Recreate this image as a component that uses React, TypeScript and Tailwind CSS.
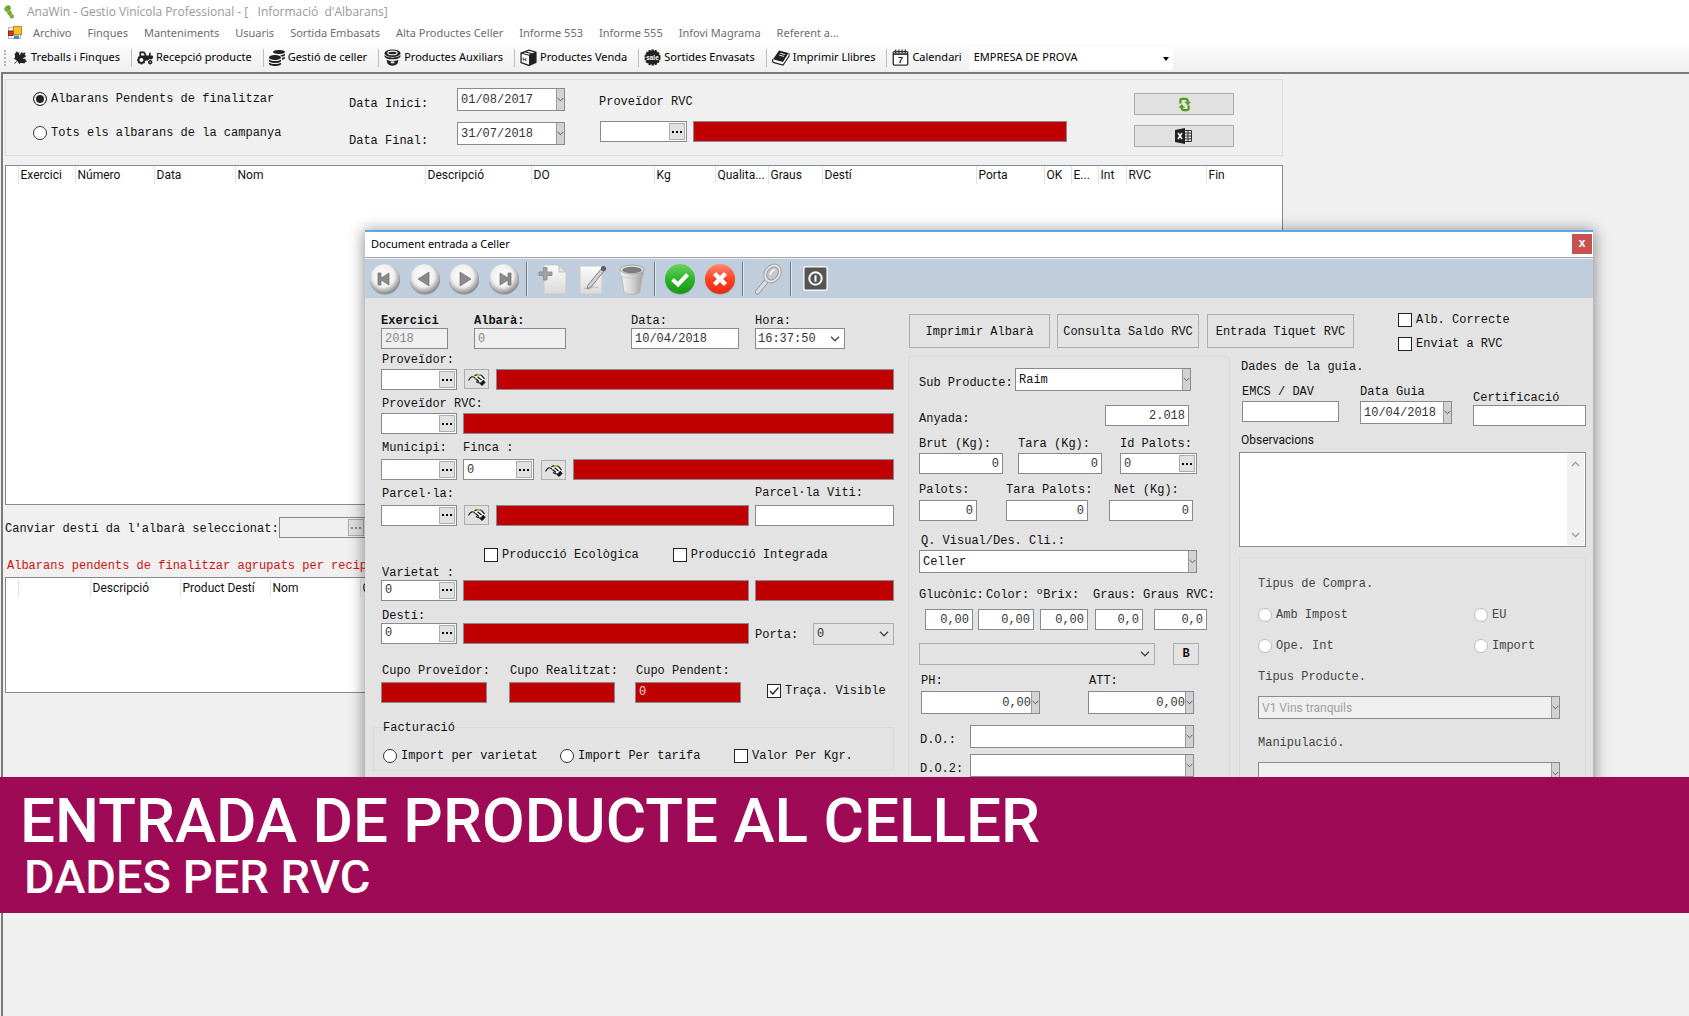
import React, { useId } from "react";
import { FaCanadianMapleLeaf, FaTractor, FaCoins } from "react-icons/fa";

const MONO = "font-['Liberation_Mono','Courier_New',monospace] text-[12px] leading-4";
const EDGE = "border border-[#858a93]";

/* ---------- toolbar icons ---------- */

const Spool = () => (
  <svg viewBox="0 0 16 16" className="h-[17px] w-[17px]" aria-hidden="true">
    <ellipse cx="8" cy="4" rx="7.5" ry="3.6" fill="#222" />
    <ellipse cx="8" cy="3.7" rx="4.4" ry="1.7" fill="none" stroke="#fff" strokeWidth="1" />
    <path d="M.5 5.500C2 9 14 9 15.500 5.500V7C14 10.600 2 10.600.500 7Z" fill="#222" />
    <path d="M2.500 10.200c3 1.600 8 1.600 11 0l-.6 3.300c-2 3-8 3-9.800 0Z" fill="#222" />
    <rect x="6.300" y="11.800" width="3.400" height="1.600" fill="#fff" />
  </svg>
);

const Box = () => (
  <svg viewBox="0 0 16 16" className="h-[17px] w-[17px]" aria-hidden="true">
    <path d="M1 3.800 8.500 1 15 3v9.500L8.500 15.500 1 12.800Z" fill="#fff" stroke="#222" strokeWidth="1.200" />
    <path d="M8.500 5.800 15 3v9.500l-6.500 3Z" fill="#222" />
    <path d="M1 3.800l7.500 2L15 3M4.500 2.500l7 2" fill="none" stroke="#222" />
    <path d="M3 8v3M5.500 8.500v3M3 9.600l2.500.6" stroke="#444" strokeWidth=".9" />
  </svg>
);

const Sale = () => (
  <svg viewBox="0 0 16 16" className="h-[17px] w-[17px]" aria-hidden="true">
    <circle cx="8" cy="8" r="6.600" fill="#222" stroke="#222" strokeWidth="2" strokeDasharray="2.200 .8" />
    <text x="8" y="10.200" textAnchor="middle" fontSize="6" fontWeight="bold" fontFamily="Liberation Sans" fill="#fff">
      sale
    </text>
  </svg>
);

const Book = () => (
  <svg viewBox="0 0 18 16" className="h-[17px] w-[18px]" aria-hidden="true">
    <path d="M7 1 16.500 3.500 11 12.500 1 9.800Z" fill="#222" />
    <path d="M8.200 3.800l4.800 1.300M7.200 5.600l4.800 1.300" stroke="#fff" strokeWidth=".9" />
    <path d="M1 9.800C0 11.500.8 12.800 2 13.200L11 15.500 17 6.500V3.800" fill="none" stroke="#222" strokeWidth="1.200" />
    <path d="M2 11.500l9 2.400L16.500 5" fill="none" stroke="#fff" strokeWidth=".8" />
  </svg>
);

const Calendar = () => (
  <svg viewBox="0 0 16 16" className="h-[17px] w-[17px]" aria-hidden="true">
    <rect x="1.200" y="2.500" width="13.600" height="12.700" rx="1" fill="#fff" stroke="#333" strokeWidth="1.300" />
    <path d="M1 4.800h14" stroke="#333" strokeWidth="1.600" />
    <path d="M3.500.5v3.500M6.500.5v3.500M9.500.5v3.500M12.500.5v3.500" stroke="#333" strokeWidth="1.200" />
    <text x="8" y="13.300" textAnchor="middle" fontSize="8.500" fontWeight="bold" fontFamily="Liberation Sans" fill="#222">
      7
    </text>
  </svg>
);

const Leaf = () => (
  <svg viewBox="0 0 12 14" className="h-[14px] w-[12px]" aria-hidden="true">
    <path d="M1.500 3.500 3.500 1 6.500.8 7.500 3 6.800 5.500 8.500 7 8.300 9 10.500 10.500 10.300 12.500 8 13.200 6.500 10.500 4.800 9 4.500 6.500 2.500 6Z" fill="#6fa51f" stroke="#5c9417" strokeWidth=".6" />
    <path d="M3 3.500C5 4.500 6 7 9 12" fill="none" stroke="#a4d14f" strokeWidth=".9" />
  </svg>
);

const FormLogo = () => (
  <svg viewBox="0 0 14 14" className="h-[14px] w-[14px]" aria-hidden="true">
    <rect x=".5" y="1.500" width="12" height="11" fill="#f4f4f4" stroke="#b9b9b9" />
    <rect x="5.500" y=".5" width="8" height="8" fill="#f2c230" stroke="#c08d12" />
    <rect x=".5" y="5" width="4.500" height="4.500" fill="#d33a21" stroke="#9c2514" />
    <rect x="6" y="9.500" width="5" height="3.500" fill="#4d86d9" />
  </svg>
);

const Chevron = ({ className = "h-2 w-2" }: { className?: string }) => (
  <svg viewBox="0 0 10 6" className={className} aria-hidden="true" fill="none" stroke="currentColor" strokeWidth="1.300">
    <path d="M1 .8 5 4.800 9 .8" />
  </svg>
);

/* ---------- dialog toolbar icons ---------- */

const Defs = () => (
  <svg className="absolute h-0 w-0" aria-hidden="true">
    <defs>
      <radialGradient id="silver" cx=".45" cy=".4" r=".6">
        <stop offset="0" stopColor="#fff" />
        <stop offset=".6" stopColor="#f0f0f0" />
        <stop offset="1" stopColor="#858585" />
      </radialGradient>
      <linearGradient id="green" x1="0" y1="0" x2="0" y2="1">
        <stop offset="0" stopColor="#6fd35f" />
        <stop offset=".5" stopColor="#2db52a" />
        <stop offset="1" stopColor="#159a12" />
      </linearGradient>
      <linearGradient id="red" x1="0" y1="0" x2="0" y2="1">
        <stop offset="0" stopColor="#ff8a72" />
        <stop offset=".5" stopColor="#fb4326" />
        <stop offset="1" stopColor="#ee2a0c" />
      </linearGradient>
      <linearGradient id="paper" x1="0" y1="0" x2="0" y2="1">
        <stop offset="0" stopColor="#fbfbfb" />
        <stop offset="1" stopColor="#dadada" />
      </linearGradient>
      <linearGradient id="steel" x1="0" y1="0" x2="1" y2="0">
        <stop offset="0" stopColor="#f4f4f4" />
        <stop offset=".5" stopColor="#d4d4d4" />
        <stop offset="1" stopColor="#a0a0a0" />
      </linearGradient>
    </defs>
  </svg>
);

const Round = ({ fill = "url(#silver)", children }: { fill?: string; children: React.ReactNode }) => (
  <svg viewBox="0 0 32 32" className="h-8 w-8" aria-hidden="true">
    <ellipse cx="16" cy="17" rx="15" ry="14.800" fill="#7f8790" opacity=".5" />
    <circle cx="16" cy="16" r="15" fill={fill} />
    {children}
  </svg>
);

const PageIcon = () => (
  <svg viewBox="0 0 32 32" className="h-8 w-8" aria-hidden="true">
    <path d="M7 2h15l7 7v22H7Z" fill="url(#paper)" stroke="#c9c9c9" />
    <path d="M22 2v7h7Z" fill="#e4e4e4" stroke="#bdbdbd" />
    <path d="M6.500 4.500h3.500v4.500h5v3.500h-5v4.500H6.500v-4.500H2v-3.500h4.500Z" fill="#a3a3a3" stroke="#868686" strokeWidth=".8" />
  </svg>
);

const EditIcon = () => (
  <svg viewBox="0 0 32 32" className="h-8 w-8" aria-hidden="true">
    <rect x="3" y="3" width="22" height="28" fill="url(#paper)" stroke="#c9c9c9" />
    <path d="M7 26c3-3 4 2 7-1s4 1 7-1" fill="none" stroke="#b8b8b8" />
    <path d="M11 22 24.500 5.500l2.800 2.200L14 24 10 26Z" fill="#cfcfcf" stroke="#7d7d7d" strokeWidth=".9" />
    <circle cx="26.500" cy="5.500" r="2.600" fill="#5b5f66" />
  </svg>
);

const BinIcon = () => (
  <svg viewBox="0 0 32 32" className="h-8 w-8" aria-hidden="true">
    <path d="M5.500 11h21L24 29c-4 3-12 3-16 0Z" fill="url(#steel)" stroke="#b5b5b5" strokeWidth=".8" />
    <path d="M4 6l.6 6.500c5 3.500 17.800 3.500 22.800 0L28 6Z" fill="url(#steel)" stroke="#b9b9b9" strokeWidth=".6" />
    <ellipse cx="16" cy="6.500" rx="12" ry="4.500" fill="#e3e3e3" stroke="#a5a5a5" />
    <ellipse cx="16" cy="7" rx="9.800" ry="3.200" fill="#7d7d7d" />
  </svg>
);

const SearchIcon = () => (
  <svg viewBox="0 0 32 32" className="h-8 w-8" aria-hidden="true">
    <path d="M13.500 18 4.500 29" stroke="#8f9499" strokeWidth="5" strokeLinecap="round" />
    <path d="M13.500 18 4.500 29" stroke="#dcdcdc" strokeWidth="3.400" strokeLinecap="round" />
    <ellipse cx="19.500" cy="10.500" rx="8" ry="10" transform="rotate(38 19.500 10.500)" fill="#e6e6e6" stroke="#a9a9a9" strokeWidth="1.200" />
    <ellipse cx="19.500" cy="10.500" rx="5.200" ry="7" transform="rotate(38 19.500 10.500)" fill="#c4c8cc" stroke="#999" />
    <path d="M17 12c1-3 3-5 5-5.500" fill="none" stroke="#fff" strokeWidth="1.300" />
  </svg>
);

const PowerIcon = () => (
  <svg viewBox="0 0 25 25" className="h-[25px] w-[25px]" aria-hidden="true">
    <rect x=".8" y=".8" width="23.400" height="23.400" rx="2" fill="#555" stroke="#f5f5f5" strokeWidth="1.500" />
    <circle cx="12.500" cy="12.500" r="6.200" fill="none" stroke="#fff" strokeWidth="2" />
    <path d="M12.500 9.300v6.400" stroke="#fff" strokeWidth="2" />
  </svg>
);

const HandIcon = () => (
  <svg viewBox="0 0 18 13" className="h-[13px] w-[18px]" aria-hidden="true">
    <path d="M.5 7.500C2.500 3.500 5 2.500 7.500 5.500" fill="none" stroke="#222" strokeWidth="1.200" />
    <path d="M6.500 2.500 10 1l4 1.500L16.500 6 15 7.500l2 2-3 3-3-2.500L7.500 6Z" fill="#fff" />
    <path d="M6.500 3C9 1 12.500 1.500 14 3l2.500 3" fill="none" stroke="#222" strokeWidth="1.200" />
    <path d="M9 1.700h3.500" stroke="#b9ad1c" strokeWidth="1.400" />
    <path d="M7.500 5.500l3.500 3M9.500 3.800 13.500 7M8 8.500l3 1.500" fill="none" stroke="#111" strokeWidth="1.300" />
    <path d="M11 9.500l3 3 3-3-1.800-2.300-1.700 2" fill="#111" stroke="#111" strokeWidth="1" />
  </svg>
);

/* ---------- form controls ---------- */

const Label = ({ children, htmlFor, className = "" }: { children: React.ReactNode; htmlFor?: string; className?: string }) => (
  <label htmlFor={htmlFor} className={`block h-4 shrink-0 whitespace-nowrap pt-px text-[#111] ${MONO} ${className}`}>
    {children}
  </label>
);

type BoxProps = { id?: string; value?: string; name?: string; className?: string; right?: boolean; disabled?: boolean };

const Text = ({ id, value = "", name, className = "", right, disabled }: BoxProps) => (
  <input
    id={id}
    aria-label={name}
    defaultValue={value}
    disabled={disabled}
    className={`h-[21px] min-w-0 rounded-none px-[3px] outline-none ${MONO} ${EDGE} ${right ? "text-right" : ""} ${
      disabled ? "bg-[#efefef] text-[#888]" : "bg-white text-[#333]"
    } ${className}`}
  />
);

const Red = ({ id, value = "", name = "Descripció", className = "" }: BoxProps) => (
  <input id={id} aria-label={name} readOnly value={value} className={`h-[21px] min-w-0 rounded-none bg-[#c00000] px-[3px] text-[#f3dcdc] outline-none ${MONO} ${EDGE} ${className}`} />
);

const Lookup = ({ id, value = "", name, className = "", disabled }: BoxProps) => (
  <div className={`flex h-[21px] shrink-0 items-center p-px ${EDGE} ${disabled ? "bg-[#efefef]" : "bg-white"} ${className}`}>
    <input id={id} aria-label={name} defaultValue={value} disabled={disabled} className={`min-w-0 flex-1 bg-transparent px-[2px] text-[#333] outline-none ${MONO}`} />
    <button
      type="button"
      aria-label="Cercar"
      className={`flex h-[17px] w-4 shrink-0 items-center justify-center gap-[2px] border border-[#adadad] bg-[#e1e1e1] ${disabled ? "text-[#888]" : "text-black"}`}
    >
      <i className="h-[2px] w-[2px] bg-current" />
      <i className="h-[2px] w-[2px] bg-current" />
      <i className="h-[2px] w-[2px] bg-current" />
    </button>
  </div>
);

const Strip = () => (
  <button type="button" aria-label="Desplegar" className="flex w-2 shrink-0 items-center justify-center overflow-hidden border-l border-[#9a9a9a] bg-[#d2d2d2] text-[#444]">
    <Chevron className="h-[5px] w-2" />
  </button>
);

const Drop = ({ id, value = "", name, className = "", right }: BoxProps) => (
  <div className={`flex h-[23px] bg-white ${EDGE} ${className}`}>
    <input id={id} aria-label={name} defaultValue={value} className={`min-w-0 flex-1 px-[3px] text-[#333] outline-none ${right ? "pr-0 text-right" : ""} ${MONO}`} />
    <Strip />
  </div>
);

const Select = ({ id, value = "", name, className = "", disabled }: BoxProps) => (
  <div className={`relative h-[23px] ${EDGE} ${disabled ? "bg-[#efefef]" : "bg-white"} ${className}`}>
    <select
      id={id}
      aria-label={name}
      disabled={disabled}
      className={`block h-full w-full appearance-none bg-transparent px-[3px] outline-none ${
        disabled ? "font-[Roboto,sans-serif] text-[12px] text-[#a0a0a0]" : `text-[#111] ${MONO}`
      }`}
    >
      <option>{value}</option>
    </select>
    <span className="pointer-events-none absolute inset-y-0 right-0 flex w-2 items-center justify-center overflow-hidden border-l border-[#9a9a9a] bg-[#d2d2d2] text-[#555]">
      <Chevron className="h-[5px] w-2" />
    </span>
  </div>
);

const FlatSelect = ({ id, value = "", name, className = "" }: BoxProps) => (
  <div className={`relative h-[22px] border border-[#acacac] ${className}`}>
    <select id={id} aria-label={name} className={`block h-full w-full appearance-none bg-transparent px-[3px] text-[#333] outline-none ${MONO}`}>
      <option>{value}</option>
    </select>
    <span className="pointer-events-none absolute inset-y-0 right-1 flex items-center text-[#444]">
      <Chevron className="h-[6px] w-[10px]" />
    </span>
  </div>
);

const Check = ({ label, checked, className = "" }: { label: string; checked?: boolean; className?: string }) => (
  <label className={`flex h-4 shrink-0 items-center gap-1 whitespace-nowrap text-[#111] ${MONO} ${className}`}>
    <span className="relative h-[14px] w-[14px]">
      <input type="checkbox" defaultChecked={checked} className="peer block h-[14px] w-[14px] appearance-none border border-[#222] bg-white" />
      <svg viewBox="0 0 14 14" className="pointer-events-none absolute inset-0 hidden h-[14px] w-[14px] peer-checked:block" fill="none" stroke="#222" strokeWidth="1.300" aria-hidden="true">
        <path d="M3 7 5.800 10 11.500 3.500" />
      </svg>
    </span>
    {label}
  </label>
);

const Radio = ({ label, name, checked, faded, className = "" }: { label: string; name: string; checked?: boolean; faded?: boolean; className?: string }) => (
  <label className={`flex h-4 shrink-0 items-center gap-[4px] whitespace-nowrap ${faded ? "text-[#444]" : "text-[#111]"} ${MONO} ${className}`}>
    <input
      type="radio"
      name={name}
      defaultChecked={checked}
      className={`block h-[14px] w-[14px] appearance-none rounded-full border bg-white checked:bg-[#222] checked:shadow-[inset_0_0_0_2px_white] ${faded ? "border-[#bbb]" : "border-[#333]"}`}
    />
    {label}
  </label>
);

const Hand = () => (
  <button type="button" aria-label="Seleccionar" className="flex h-5 w-[25px] shrink-0 items-center justify-center border border-[#adadad] bg-[#e1e1e1]">
    <HandIcon />
  </button>
);

const Field = ({
  label,
  kind: Kind = Text,
  width,
  bold,
  indent = "",
  gap = "mt-[2px]",
  className = "",
  ...rest
}: { label: string; kind?: React.ComponentType<BoxProps>; width: string; bold?: boolean; indent?: string; gap?: string; className?: string; value?: string; right?: boolean; disabled?: boolean }) => {
  const id = useId();
  return (
    <div className={`${width} ${className}`}>
      <Label htmlFor={id} className={`${indent} ${bold ? "font-bold" : ""}`}>
        {label}
      </Label>
      <div className={`flex ${gap}`}>
        <Kind id={id} {...rest} className="w-full" />
      </div>
    </div>
  );
};

/* ---------- main window ---------- */

const MENU = ["Archivo", "Finques", "Manteniments", "Usuaris", "Sortida Embasats", "Alta Productes Celler", "Informe 553", "Informe 555", "Infovi Magrama", "Referent a..."];

const TOOLS: [string, React.ReactNode][] = [
  ["Treballs i Finques", <FaCanadianMapleLeaf className="h-4 w-4 rotate-45" />],
  ["Recepció producte", <FaTractor className="h-4 w-4" />],
  ["Gestió de celler", <FaCoins className="h-4 w-4" />],
  ["Productes Auxiliars", <Spool />],
  ["Productes Venda", <Box />],
  ["Sortides Envasats", <Sale />],
  ["Imprimir Llibres", <Book />],
  ["Calendari", <Calendar />],
];

type Col = [string, string];

const MAIN_COLS: Col[] = [
  ["", "w-[12px]"],
  ["Exercici", "w-[57px]"],
  ["Número", "w-[79px]"],
  ["Data", "w-[81px]"],
  ["Nom", "w-[190px]"],
  ["Descripció", "w-[106px]"],
  ["DO", "w-[123px]"],
  ["Kg", "w-[61px]"],
  ["Qualita...", "w-[53px]"],
  ["Graus", "w-[54px]"],
  ["Destí", "w-[154px]"],
  ["Porta", "w-[68px]"],
  ["OK", "w-[27px]"],
  ["E...", "w-[27px]"],
  ["Int", "w-[28px]"],
  ["RVC", "w-[80px]"],
  ["Fin", ""],
];

const GROUP_COLS: Col[] = [
  ["", "w-[12px]"],
  ["", "w-[72px]"],
  ["Descripció", "w-[90px]"],
  ["Product Destí", "w-[90px]"],
  ["Nom", "w-[90px]"],
  ["Capacitat", ""],
];

const Grid = ({ cols, name, className }: { cols: Col[]; name: string; className: string }) => (
  <div className={`bg-white ${EDGE} ${className}`}>
    <table aria-label={name} className="w-full table-fixed border-collapse font-[Roboto,sans-serif] text-[12px] leading-[18px] text-[#111]">
      <thead>
        <tr>
          {cols.map(([text, width], i) => (
            <th key={i} scope="col" className={`overflow-hidden whitespace-nowrap pl-[2px] text-left font-normal ${width} ${i ? "border-l border-[#e3e3e3]" : ""}`}>
              {text}
            </th>
          ))}
        </tr>
      </thead>
      <tbody />
    </table>
  </div>
);

const Header = () => (
  <header className="bg-white font-['Noto_Sans','Open_Sans',sans-serif] text-[11px]">
    <div className="flex h-[23px] items-center gap-[12px] pl-[3px] text-[#999]">
      <Leaf />
      <h1 className="whitespace-pre font-['Open_Sans',sans-serif] text-[12px]">AnaWin - Gestio Vinícola Professional - [   Informació  d'Albarans]</h1>
    </div>
    <nav className="flex h-5 items-center pl-2 text-[#6d6d6d]">
      <FormLogo />
      <ul className="ml-[11px] flex gap-4 whitespace-nowrap">
        {MENU.map((m) => (
          <li key={m}>
            <a href="#">{m}</a>
          </li>
        ))}
      </ul>
    </nav>
    <div className="flex h-[29px] items-center bg-linear-to-b from-[#fdfdfd] to-[#efefef] pl-1">
      <span className="mr-[6px] h-[16px] border-l-2 border-dotted border-[#b5b5b5]" />
      {TOOLS.map(([text, icon], i) => (
        <div key={text} className="flex items-center">
          {i > 0 && <span className="ml-[11px] mr-[5px] h-[18px] w-px bg-[#bdbdbd]" />}
          <button type="button" className="flex items-center gap-[3px] whitespace-nowrap text-black">
            <span className="text-[#222]">{icon}</span>
            {text}
          </button>
        </div>
      ))}
      <div className="relative ml-[7px] h-[24px] w-[204px] bg-white">
        <select aria-label="Empresa" className="block h-full w-full appearance-none bg-transparent pl-[5px] text-black outline-none">
          <option>EMPRESA DE PROVA</option>
        </select>
        <span className="pointer-events-none absolute right-1 top-[11px] border-x-[3px] border-t-[4px] border-x-transparent border-t-black" />
      </div>
    </div>
  </header>
);

const Filters = () => (
  <section className="mr-[406px] flex h-[77px] items-start border border-[#dcdcdc] pl-[27px]">
    <div className="w-[316px] pt-[11px]">
      <Radio name="abast" label="Albarans Pendents de finalitzar" checked />
      <Radio name="abast" label="Tots els albarans de la campanya" className="mt-[18px]" />
    </div>
    <div className="pt-2">
      <div className="flex items-start">
        <Label htmlFor="inici" className="mt-[7px] w-[108px]">Data Inici:</Label>
        <Drop id="inici" value="01/08/2017" className="w-[108px]" />
      </div>
      <div className="mt-[11px] flex items-start">
        <Label htmlFor="final" className="mt-[10px] w-[108px]">Data Final:</Label>
        <Drop id="final" value="31/07/2018" className="w-[108px]" />
      </div>
    </div>
    <div className="ml-[34px] min-w-0 flex-1 pt-[13px]">
      <Label htmlFor="prov-rvc">Proveïdor RVC</Label>
      <div className="mt-[12px] flex gap-[6px]">
        <Lookup id="prov-rvc" className="ml-px w-[87px]" />
        <Red className="flex-1" />
      </div>
    </div>
    <div className="ml-[67px] mr-[48px] w-[100px] pt-[13px]">
      <button type="button" aria-label="Actualitzar" className="flex h-[22px] w-full items-center justify-center border border-[#adadad] bg-[#e1e1e1]">
        <svg viewBox="0 0 14 16" className="h-[15px] w-[13px]" fill="none" stroke="#4f9a16" strokeWidth="2.400" aria-hidden="true">
          <path d="M2.500 7V3.800C2.500 2.500 3.500 2 5 2h3c2 0 2.500 1 2.500 3" />
          <path d="M11.500 9v3.200c0 1.300-1 1.800-2.500 1.800H6.500C4.500 14 4 13 4 11.500" />
          <path d="M7 5h7l-3.500 4ZM.5 11.500h7L4 7.800Z" fill="#4f9a16" stroke="none" />
          <path d="M6 8.500 9 7" stroke="#e1e1e1" strokeWidth="1" />
        </svg>
      </button>
      <button type="button" aria-label="Exportar a Excel" className="mt-[10px] flex h-[22px] w-full items-center justify-center border border-[#adadad] bg-[#e1e1e1]">
        <svg viewBox="0 0 18 16" className="h-4 w-[18px]" aria-hidden="true">
          <path d="M0 2 10 0v16L0 14Z" fill="#222" />
          <path d="M3 5l4 6M7 5l-4 6" stroke="#fff" strokeWidth="1.500" />
          <path d="M10 2.500h6.500v11H10M10 5.200h6.500M10 8h6.500M10 10.800h6.500M13 2.500v11" fill="none" stroke="#333" />
        </svg>
      </button>
    </div>
  </section>
);

/* ---------- dialog ---------- */

const Sep = ({ className = "" }: { className?: string }) => <span className={`h-[34px] w-[2px] border-l border-[#6f7780] bg-[#dfe7ef] ${className}`} />;

const Tool = ({ name, className = "", children }: { name: string; className?: string; children: React.ReactNode }) => (
  <button type="button" aria-label={name} className={`shrink-0 ${className}`}>
    {children}
  </button>
);

const Big = ({ children, className }: { children: string; className: string }) => (
  <button type="button" className={`h-[34px] shrink-0 whitespace-nowrap border border-[#adadad] pt-[2px] text-[#111] ${MONO} ${className}`}>
    {children}
  </button>
);

const LeftColumn = () => (
  <div className="min-w-0 pl-[16px] pr-[11px] pt-[14px]">
    <div className="flex">
      <Field label="Exercici" bold width="w-[67px]" gap="" value="2018" disabled />
      <Field label="Albarà:" bold width="w-[92px]" className="ml-[26px]" gap="" value="0" disabled />
      <Field label="Data:" width="w-[108px]" className="ml-[65px]" gap="" value="10/04/2018" />
      <div className="ml-[16px] w-[90px]">
        <Label htmlFor="hora">Hora:</Label>
        <div className={`relative flex h-[21px] bg-white ${EDGE}`}>
          <select id="hora" className={`w-full appearance-none bg-transparent px-[2px] text-[#333] outline-none ${MONO}`}>
            <option>16:37:50</option>
          </select>
          <Chevron className="pointer-events-none absolute right-1 top-[7px] h-[6px] w-[10px] text-[#444]" />
        </div>
      </div>
    </div>

    <Label htmlFor="prov" className="mt-[2px] pl-px">Proveïdor:</Label>
    <div className="mt-[2px] flex gap-[7px]">
      <Lookup id="prov" className="w-[76px]" />
      <Hand />
      <Red className="flex-1" />
    </div>

    <Label htmlFor="prov2" className="mt-[5px] pl-px">Proveïdor RVC:</Label>
    <div className="mt-[2px] flex gap-[6px]">
      <Lookup id="prov2" className="w-[76px]" />
      <Red className="flex-1" />
    </div>

    <div className="mt-[5px] flex items-end">
      <Field kind={Lookup} label="Municipi:" indent="pl-px" width="w-[76px]" gap="mt-[4px]" />
      <Field kind={Lookup} label="Finca :" width="w-[71px]" className="ml-[6px] mr-[7px]" gap="mt-[4px]" value="0" />
      <Hand />
      <Red className="ml-[7px] flex-1" />
    </div>

    <div className="mt-[4px] flex items-end gap-[6px]">
      <div className="min-w-0 flex-1">
        <Label htmlFor="parcela" className="pl-px">Parcel·la:</Label>
        <div className="mt-[4px] flex gap-[7px]">
          <Lookup id="parcela" className="w-[76px]" />
          <Hand />
          <Red className="flex-1" />
        </div>
      </div>
      <div className="w-[139px]">
        <Label htmlFor="viti">Parcel·la Viti:</Label>
        <Text id="viti" className="mt-[4px] w-full" />
      </div>
    </div>

    <div className="mt-[21px] flex gap-[34px] pl-[103px]">
      <Check label="Producció Ecològica" />
      <Check label="Producció Integrada" />
    </div>

    <Label htmlFor="varietat" className="mt-px pl-px">Varietat :</Label>
    <div className="flex gap-[6px]">
      <Lookup id="varietat" value="0" className="w-[76px]" />
      <Red className="flex-1" />
      <Red className="w-[139px]" />
    </div>

    <Label htmlFor="desti" className="mt-[6px] pl-px">Destí:</Label>
    <div className="flex gap-[6px]">
      <Lookup id="desti" value="0" className="w-[76px]" />
      <Red className="flex-1" />
      <div className="flex w-[139px] items-center justify-between">
        <Label htmlFor="porta">Porta:</Label>
        <FlatSelect id="porta" value="0" className="w-[81px]" />
      </div>
    </div>

    <div className="mt-[17px] flex items-end">
      <Field kind={Red} label="Cupo Proveïdor:" indent="pl-px" width="w-[106px]" gap="mt-[4px]" />
      <Field kind={Red} label="Cupo Realitzat:" indent="pl-px" width="w-[106px]" className="ml-[22px]" gap="mt-[4px]" />
      <Field kind={Red} label="Cupo Pendent:" indent="pl-px" width="w-[106px]" className="ml-[20px]" gap="mt-[4px]" value="0" />
      <Check label="Traça. Visible" checked className="mb-[4px] ml-[26px]" />
    </div>

    <fieldset className="-ml-[8px] mt-[17px] border border-[#dadada] pb-[6px] pl-[9px]">
      <legend className={`whitespace-nowrap text-[#111] ${MONO}`}>Facturació</legend>
      <div className="flex pt-3">
        <Radio name="factura" label="Import per varietat" className="w-[177px]" />
        <Radio name="factura" label="Import Per tarifa" className="w-[174px]" />
        <Check label="Valor Per Kgr." />
      </div>
    </fieldset>
  </div>
);

const MiddleColumn = () => (
  <section className="min-w-0 rounded-t-sm border border-[#dadada] pl-[10px] pt-[11px]">
    <div className="flex items-center">
      <Label htmlFor="subp" className="mt-1 w-[96px]">Sub Producte:</Label>
      <Select id="subp" value="Raim" className="w-[176px]" />
    </div>
    <div className="mt-[14px] flex items-center">
      <Label htmlFor="anyada" className="mt-[4px] w-[186px]">Anyada:</Label>
      <Text id="anyada" value="2.018" right className="w-[84px]" />
    </div>
    <div className="mt-[9px] flex">
      <Field label="Brut (Kg):" width="w-[84px]" value="0" right />
      <Field label="Tara (Kg):" width="w-[84px]" className="ml-[15px]" value="0" right />
      <Field kind={Lookup} label="Id Palots:" width="w-[77px]" className="ml-[18px]" value="0" />
    </div>
    <div className="mt-[7px] flex">
      <Field label="Palots:" width="w-[58px]" gap="mt-[3px]" value="0" right />
      <Field label="Tara Palots:" width="w-[82px]" className="ml-[29px]" gap="mt-[3px]" value="0" right />
      <Field label="Net (Kg):" width="w-[84px]" indent="pl-[5px]" className="ml-[21px]" gap="mt-[3px]" value="0" right />
    </div>
    <Field kind={Select} label="Q. Visual/Des. Cli.:" indent="pl-[2px]" width="w-[278px]" className="mt-[11px]" value="Celler" />
    <div className="mt-[13px] flex">
      <Label htmlFor="gluconic" className="w-[67px]">Glucònic:</Label>
      <Label htmlFor="color" className="w-[50px]">Color:</Label>
      <Label htmlFor="brix" className="w-[57px]">ºBrix:</Label>
      <Label htmlFor="graus" className="w-[50px]">Graus:</Label>
      <Label htmlFor="graus-rvc">Graus RVC:</Label>
    </div>
    <div className="mt-[7px] flex pl-[6px]">
      <Text id="gluconic" value="0,00" right className="w-[48px]" />
      <Text id="color" value="0,00" right className="ml-[5px] w-[56px]" />
      <Text id="brix" value="0,00" right className="ml-[6px] w-[48px]" />
      <Text id="graus" value="0,0" right className="ml-[7px] w-[48px]" />
      <Text id="graus-rvc" value="0,0" right className="ml-[11px] w-[53px]" />
    </div>
    <div className="mt-[13px] flex">
      <FlatSelect name="Partida" className="w-[236px]" />
      <button type="button" className={`ml-[18px] h-[22px] w-[26px] border border-[#adadad] font-bold text-[#111] ${MONO}`}>
        B
      </button>
    </div>
    <div className="mt-[7px] flex pl-[2px]">
      <Field kind={Drop} label="PH:" width="w-[119px]" gap="mt-[3px]" value="0,00" right />
      <Field kind={Drop} label="ATT:" width="w-[106px]" indent="pl-px" className="ml-[48px]" gap="mt-[3px]" value="0,00" right />
    </div>
    <div className="mt-[11px] flex items-center">
      <Label htmlFor="do1" className="mt-1 w-[51px] pl-px">D.O.:</Label>
      <Select id="do1" className="w-[224px]" />
    </div>
    <div className="mt-[6px] flex items-center">
      <Label htmlFor="do2" className="mt-1 w-[51px] pl-px">D.O.2:</Label>
      <Select id="do2" className="w-[224px]" />
    </div>
  </section>
);

const RightColumn = () => (
  <section className="min-w-0 pr-[7px]">
    <h3 className={`mt-[2px] h-4 pl-[2px] pt-px text-[#111] ${MONO}`}>Dades de la guía.</h3>
    <div className="mt-[9px] flex pl-[3px]">
      <Field label="EMCS / DAV" width="w-[97px]" />
      <Field kind={Drop} label="Data Guia" width="w-[92px]" className="ml-[21px]" value="10/04/2018" />
      <Field label="Certificació" width="min-w-0 flex-1" className="ml-[21px] mt-[6px]" gap="" />
    </div>
    <label htmlFor="obs" className="mt-[6px] block h-4 pl-[2px] font-[Roboto,sans-serif] text-[12px] leading-4 text-[#111]">
      Observacions
    </label>
    <div className={`mt-[4px] flex h-[95px] bg-white ${EDGE}`}>
      <textarea id="obs" className={`min-w-0 flex-1 resize-none p-1 outline-none ${MONO}`} />
      <div className="my-px mr-px flex w-[17px] flex-col items-center justify-between bg-[#f0f0f0] py-[7px] text-[#999]">
        <Chevron className="h-[6px] w-[9px] rotate-180" />
        <Chevron className="h-[6px] w-[9px]" />
      </div>
    </div>
    <div className="mt-[10px] border border-[#dadada] pl-[18px] pr-[25px] pt-[18px]">
      <h3 className={`h-4 text-[#444] ${MONO}`}>Tipus de Compra.</h3>
      <div className="mt-[15px] grid grid-cols-[216px_auto] gap-y-[15px]">
        <Radio faded name="compra" label="Amb Impost" />
        <Radio faded name="compra" label="EU" />
        <Radio faded name="compra" label="Ope. Int" />
        <Radio faded name="compra" label="Import" />
      </div>
      <Label htmlFor="tipus" className="mt-[14px] text-[#444]">Tipus Producte.</Label>
      <Select id="tipus" value="V1 Vins tranquils" disabled className="mt-[12px]" />
      <Label htmlFor="manip" className="mt-[15px] text-[#444]">Manipulació.</Label>
      <Select id="manip" disabled className="mt-[12px]" />
    </div>
  </section>
);

const Dialog = () => (
  <section role="dialog" aria-label="Document entrada a Celler" className="absolute left-[365px] right-[96px] top-[230px] border-t-2 border-[#5fa6dc] bg-[#e3e3e3] shadow-[0_2px_14px_2px_rgba(0,0,0,0.4)]">
    <div className="flex h-[26px] items-center justify-between border-b border-[#a9a9a9] bg-white pl-[6px] pr-px">
      <h2 className="font-['Noto_Sans','Open_Sans',sans-serif] text-[11px] text-black">Document entrada a Celler</h2>
      <button type="button" aria-label="Tancar" className={`mb-px h-5 w-5 bg-[#c75050] text-center font-bold text-white ${MONO}`}>
        x
      </button>
    </div>
    <div className="flex h-[40px] items-center border-t border-[#e8eef4] bg-[#bfcddc] pl-1">
      <Defs />
      <Tool name="Primer">
        <Round>
          <path d="M9 10h3v5l8-5v12l-8-5v5H9Z" fill="#8a8a8a" stroke="#6f6f6f" strokeWidth=".7" />
        </Round>
      </Tool>
      <Tool name="Anterior" className="ml-2">
        <Round>
          <path d="M20 9v14L9 16Z" fill="#8a8a8a" stroke="#6f6f6f" strokeWidth=".7" />
        </Round>
      </Tool>
      <Tool name="Següent" className="ml-[7px]">
        <Round>
          <path d="M12 9v14l11-7Z" fill="#8a8a8a" stroke="#6f6f6f" strokeWidth=".7" />
        </Round>
      </Tool>
      <Tool name="Últim" className="ml-2">
        <Round>
          <path d="M23 10h-3v5l-8-5v12l8-5v5h3Z" fill="#8a8a8a" stroke="#6f6f6f" strokeWidth=".7" />
        </Round>
      </Tool>
      <Sep className="ml-[6px]" />
      <Tool name="Nou" className="ml-[9px]">
        <PageIcon />
      </Tool>
      <Tool name="Editar" className="ml-2">
        <EditIcon />
      </Tool>
      <Tool name="Esborrar" className="ml-[7px]">
        <BinIcon />
      </Tool>
      <Sep className="ml-[6px]" />
      <Tool name="Acceptar" className="ml-[8px]">
        <Round fill="url(#green)">
          <path d="M8.500 16.500 14 21.500 23.500 11.500" fill="none" stroke="#fff" strokeWidth="4" />
        </Round>
      </Tool>
      <Tool name="Cancel·lar" className="ml-2">
        <Round fill="url(#red)">
          <path d="M10.500 10.500l11 11M21.500 10.500l-11 11" stroke="#fff" strokeWidth="4.500" />
        </Round>
      </Tool>
      <Sep className="ml-[6px]" />
      <Tool name="Buscar" className="ml-[9px]">
        <SearchIcon />
      </Tool>
      <Sep className="ml-[5px]" />
      <Tool name="Sortir" className="ml-[11px]">
        <PowerIcon />
      </Tool>
    </div>
    <div className="grid grid-cols-[540fr_688fr] pb-10">
      <LeftColumn />
      <div className="min-w-0 pl-[3px]">
        <div className="flex h-[58px] items-start">
          <Big className="ml-px mt-4 w-[141px]">Imprimir Albarà</Big>
          <Big className="ml-[7px] mt-4 w-[142px]">Consulta Saldo RVC</Big>
          <Big className="ml-[8px] mt-4 w-[147px]">Entrada Tiquet RVC</Big>
          <div className="ml-[44px] flex flex-col gap-2 pt-[14px]">
            <Check label="Alb. Correcte" />
            <Check label="Enviat a RVC" />
          </div>
        </div>
        <div className="grid grid-cols-[322fr_354fr] gap-x-[9px]">
          <MiddleColumn />
          <RightColumn />
        </div>
      </div>
    </div>
  </section>
);

export default function App() {
  return (
    <div className="relative flex min-h-screen flex-col overflow-hidden bg-[#f0f0f0]">
      <Header />
      <main className="ml-px flex-1 border-l-2 border-t-2 border-[#7a7a7a] pl-[2px] pt-[5px]">
        <Filters />
        <Grid cols={MAIN_COLS} name="Albarans" className="mr-[406px] mt-[9px] h-[340px]" />
        <div className="mt-[12px] flex items-center">
          <Label htmlFor="canviar" className="w-[274px]">Canviar destí da l'albarà seleccionat:</Label>
          <Lookup id="canviar" disabled className="w-[87px]" />
        </div>
        <h2 className={`mt-[20px] h-4 pl-[2px] text-[#d01010] ${MONO}`}>Albarans pendents de finalitzar agrupats per recipient</h2>
        <Grid cols={GROUP_COLS} name="Albarans per recipient" className="mr-[806px] mt-[3px] h-[116px] pt-px" />
      </main>
      <Dialog />
      <div className="absolute inset-x-0 top-[777px] h-[136px] bg-[#9e0a55] pl-5 pt-[12px] font-[Roboto,sans-serif] font-medium text-white">
        <p className="whitespace-nowrap text-[62px] leading-[64px]">ENTRADA DE PRODUCTE AL CELLER</p>
        <p className="whitespace-nowrap pl-1 text-[47px] leading-[48px]">DADES PER RVC</p>
      </div>
      <div className="absolute inset-x-0 bottom-0 top-[913px] ml-px border-l-2 border-[#7a7a7a] bg-[#f0f0f0]" />
    </div>
  );
}
